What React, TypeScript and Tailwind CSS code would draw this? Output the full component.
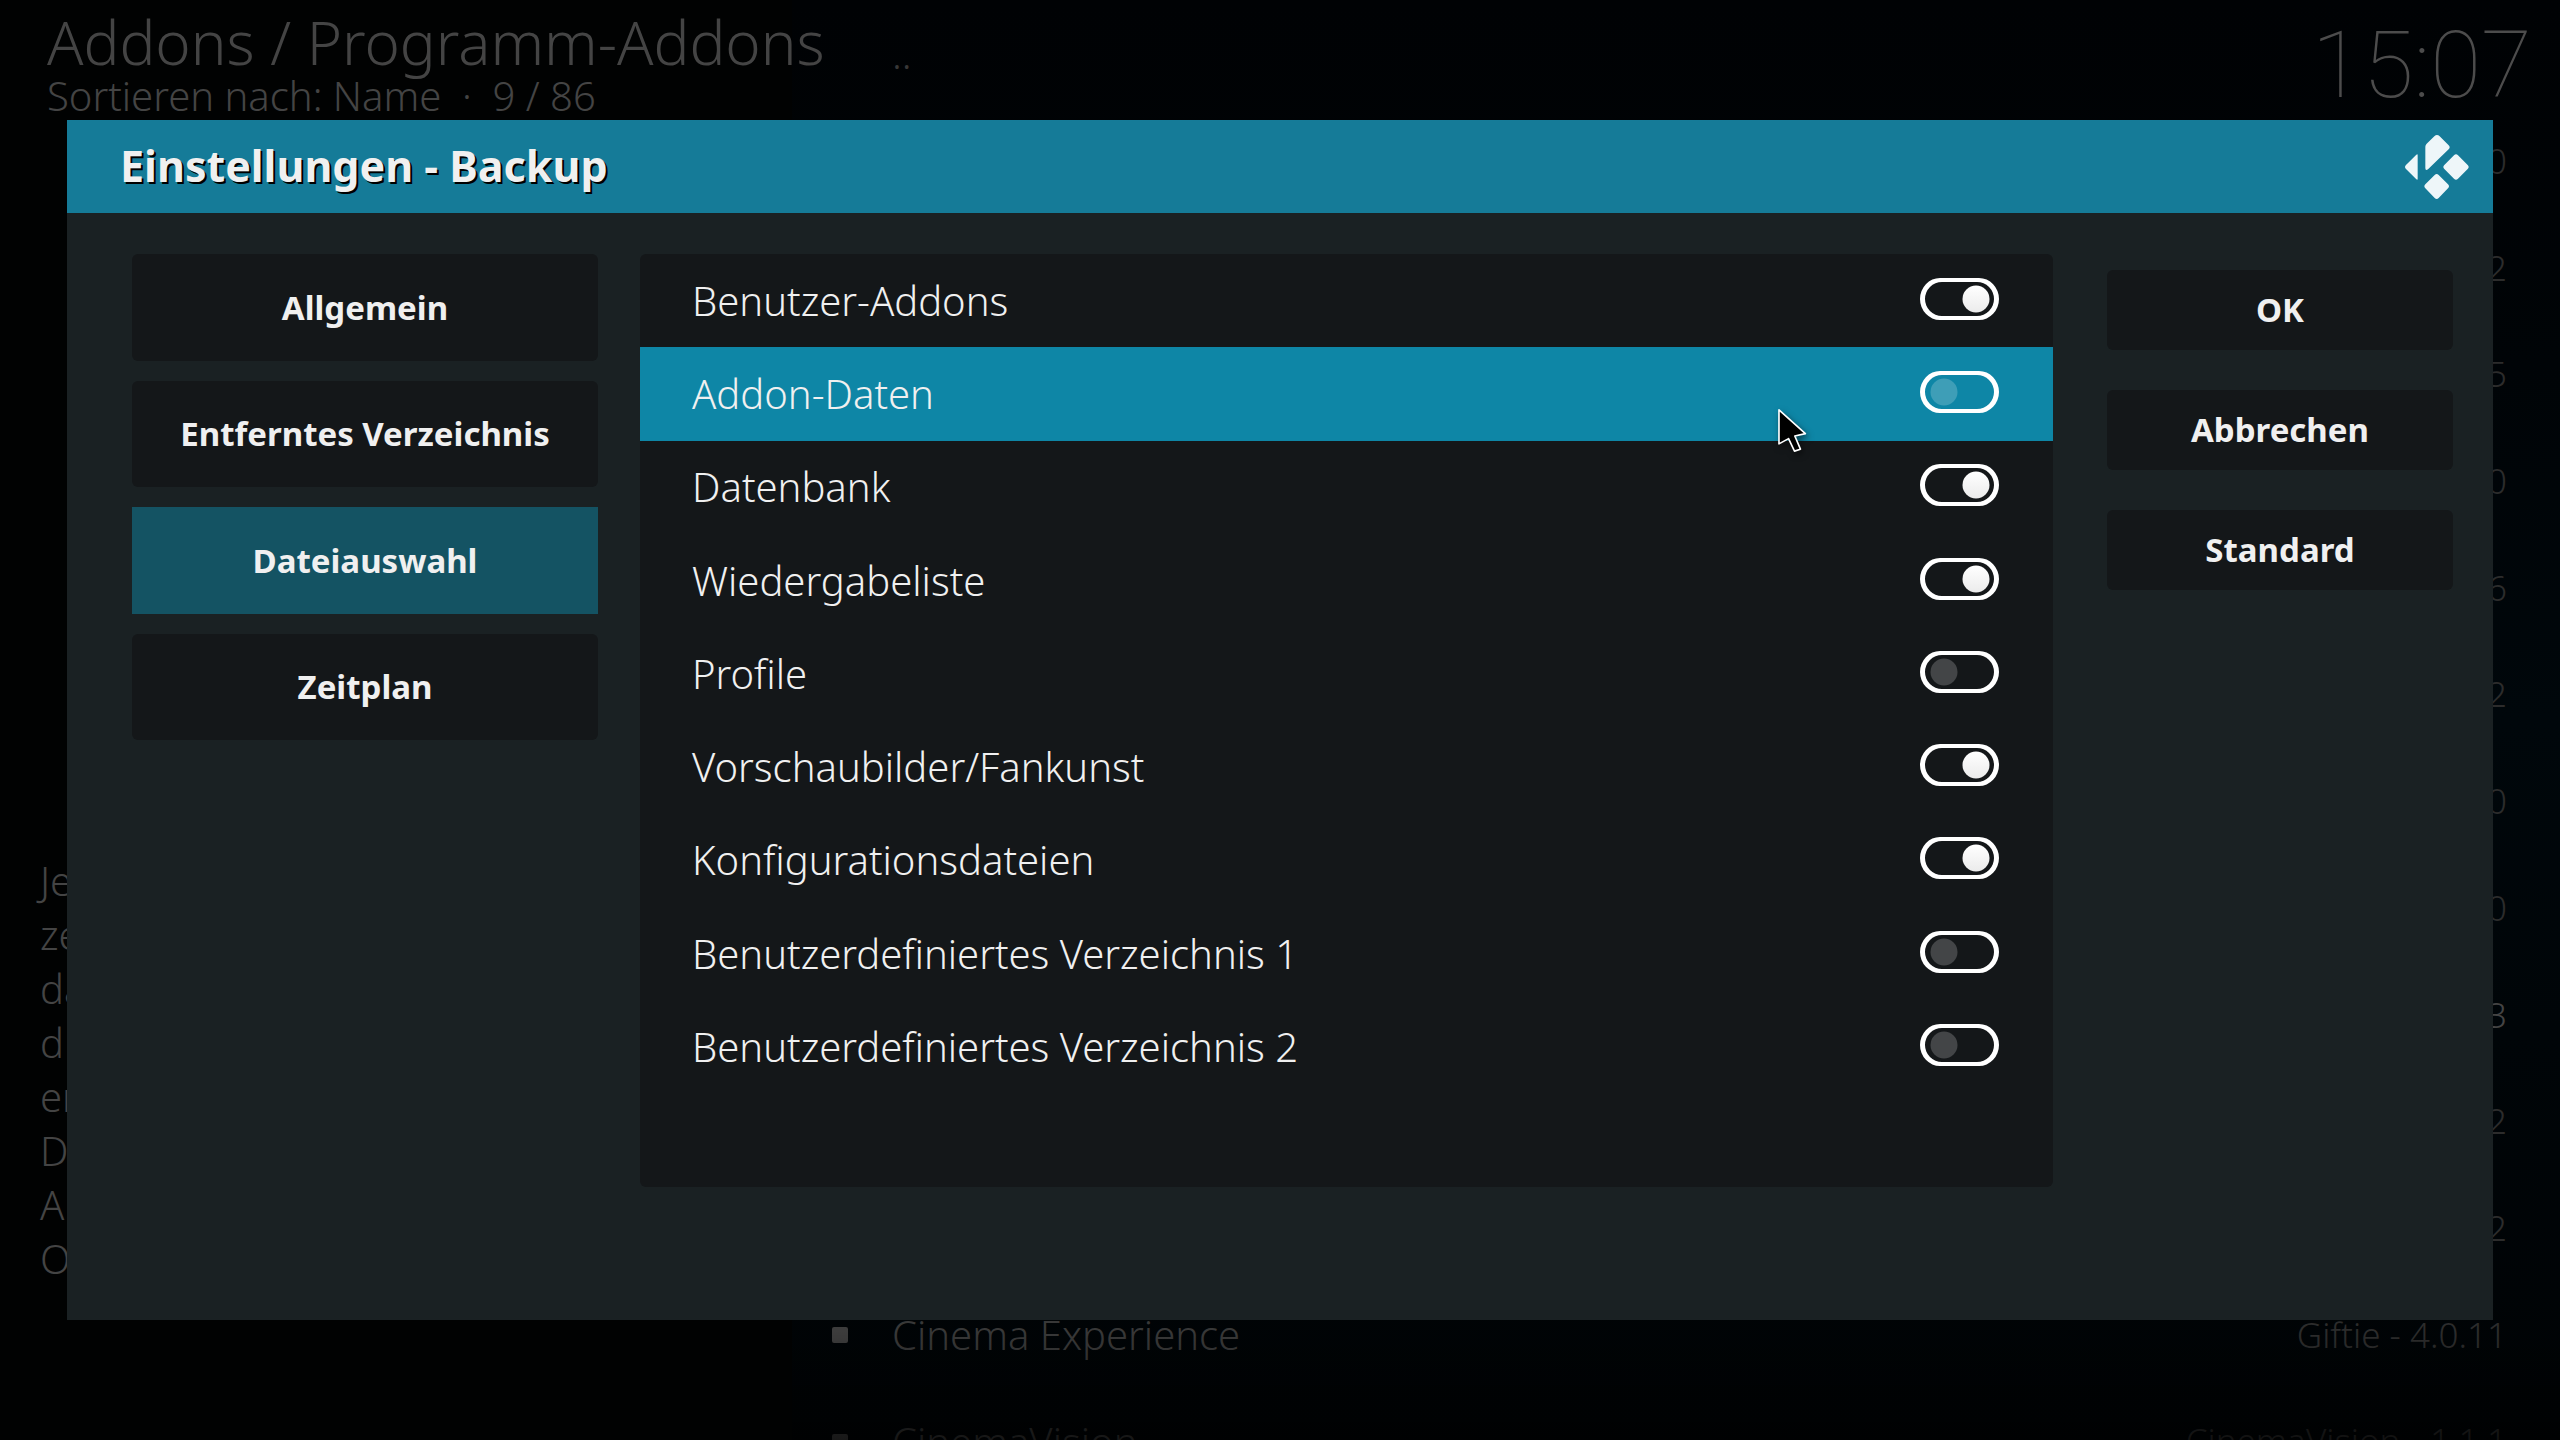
import React, { useState } from 'react';
import clsx from 'clsx';

interface Setting {
  id: string;
  label: string;
  enabled: boolean;
}

interface Addon {
  name: string;
  version: string;
  active?: boolean;
}

const categories = ['Allgemein', 'Entferntes Verzeichnis', 'Dateiauswahl', 'Zeitplan'];

const actions = ['OK', 'Abbrechen', 'Standard'];

const initialSettings: Setting[] = [
  { id: 'user-addons', label: 'Benutzer-Addons', enabled: true },
  { id: 'addon-data', label: 'Addon-Daten', enabled: false },
  { id: 'database', label: 'Datenbank', enabled: true },
  { id: 'playlists', label: 'Wiedergabeliste', enabled: true },
  { id: 'profiles', label: 'Profile', enabled: false },
  { id: 'thumbnails', label: 'Vorschaubilder/Fankunst', enabled: true },
  { id: 'config', label: 'Konfigurationsdateien', enabled: true },
  { id: 'custom-1', label: 'Benutzerdefiniertes Verzeichnis 1', enabled: false },
  { id: 'custom-2', label: 'Benutzerdefiniertes Verzeichnis 2', enabled: false },
];

const addons: Addon[] = [
  { name: '..', version: '' },
  { name: '', version: '0' },
  { name: '', version: '2' },
  { name: '', version: '5' },
  { name: '', version: '0' },
  { name: '', version: '6' },
  { name: '', version: '2' },
  { name: '', version: '0' },
  { name: '', version: '0' },
  { name: '', version: '3', active: true },
  { name: '', version: '2' },
  { name: '', version: '2' },
  { name: 'Cinema Experience', version: 'Giftie - 4.0.11' },
  { name: 'CinemaVision', version: 'CinemaVision - 1.1.1' },
];

const description = ['Je', 'ze', 'da', 'd', 'er', 'D', 'A', 'O'];

const KodiLogo = () => (
  <svg viewBox="75 75 192 192" className="size-16 shrink-0" fill="#eef6f9" aria-hidden="true">
    <path d="M113 136V206Q113 211 109 208L78 177Q72 171 78 165L109 134Q113 130 113 136Z" />
    <path d="M163 79Q171 71 179 79L206 106Q212 112 206 118L144 178Q136 183 136 174V110Q136 105 140 101Z" />
    <path d="M222 136Q228 130 234 136L263 165Q269 171 263 177L234 206Q228 212 222 206L193 177Q187 171 193 165Z" />
    <path d="M164 195Q170 189 176 195L204 223Q210 229 204 235L176 264Q170 270 164 264L136 235Q130 229 136 223Z" />
  </svg>
);

const Toggle = ({ on }: { on: boolean }) => (
  <svg viewBox="0 0 79 42" className="mb-1 h-[42px] w-[79px]" aria-hidden="true">
    <defs>
      <linearGradient id="knob" x1="0" y1="0" x2="0" y2="1">
        <stop offset="0" stopColor="#ffffff" />
        <stop offset="1" stopColor="#ebebeb" />
      </linearGradient>
    </defs>
    <path
      fill="#ffffff"
      fillRule="evenodd"
      d="M20 0H59A20 21 0 0 1 59 42H20A20 21 0 0 1 20 0ZM22 4A17 17 0 0 0 22 38H57A17 17 0 0 0 57 4Z"
    />
    {on ? (
      <circle cx="56" cy="21" r="13.5" fill="url(#knob)" />
    ) : (
      <circle cx="24" cy="21" r="13.5" fill="#ffffff" fillOpacity="0.2" />
    )}
  </svg>
);

const Cursor = () => (
  <svg
    viewBox="0 0 100 150"
    className="pointer-events-none absolute top-[407px] left-[1777px] h-[50px] w-[33px] overflow-visible drop-shadow-[2px_3px_3px_rgba(0,0,0,0.5)]"
    aria-hidden="true"
  >
    <path
      d="M6 8L86 80L54 87L71 127L53 133L35 95L6 111Z"
      fill="#000000"
      stroke="#ffffff"
      strokeWidth="5"
      strokeLinejoin="round"
    />
  </svg>
);

const AddonBrowser = () => (
  <div className="flex h-full font-light text-[#444444]">
    <div className="relative z-10 flex w-[792px] shrink-0 flex-col bg-[#010202] pt-2">
      <h1 className="pl-[47px] text-[60px] leading-[68px] whitespace-nowrap">Addons / Programm-Addons</h1>
      <p className="pl-[47px] text-[40px] leading-[40px] whitespace-nowrap">Sortieren nach: Name &nbsp;·&nbsp; 9 / 86</p>
      <div className="mt-auto mb-[154px] pl-10 text-[40px] leading-[54px]">
        {description.map((line) => (
          <p key={line}>{line}</p>
        ))}
      </div>
    </div>
    <div className="relative min-w-0 flex-1 overflow-hidden bg-linear-to-b from-[#000204] via-[#00070b] to-[#000305] pt-px">
      <ul className="grid h-[1494px] grid-rows-14">
        {addons.map((addon, i) => (
          <li key={i} className="flex items-center pr-[53px] pl-10 text-[#383838]">
            {addon.name && (
              <span className={clsx('h-4 w-4 rounded-xs', addon.name === '..' ? 'bg-transparent' : 'bg-[#3c3c3c]')} />
            )}
            <span className="pl-11 text-[40px]">{addon.name}</span>
            <span className={clsx('ml-auto text-[35px]', addon.active ? 'text-[#444444]' : 'text-[#2c2c2c]')}>
              {addon.version}
            </span>
          </li>
        ))}
      </ul>
      <div className="absolute inset-x-0 bottom-0 h-[110px] bg-linear-to-b from-transparent to-black/60" />
      <time className="absolute top-2.5 right-7 font-['Roboto',sans-serif] text-[93px] leading-[112px] font-thin text-[#4c4c4c]">
        15:07
      </time>
    </div>
  </div>
);

export default function App() {
  const [settings, setSettings] = useState(initialSettings);
  const [category, setCategory] = useState('Dateiauswahl');
  const [focused, setFocused] = useState('addon-data');

  const toggleSetting = (id: string) => {
    setFocused(id);
    setSettings(settings.map((s) => (s.id === id ? { ...s, enabled: !s.enabled } : s)));
  };

  return (
    <div className="relative h-screen overflow-hidden bg-black font-['Noto_Sans',sans-serif]">
      <AddonBrowser />

      <div className="absolute inset-0 z-20 px-[67px] pt-[120px]">
        <div role="dialog" aria-labelledby="dialog-title" className="bg-[#1a2123] text-[#f0f0f0]">
          <header className="flex h-[93px] items-center justify-between bg-[#157b98] pr-6 pl-[53px]">
            <h2 id="dialog-title" className="text-[43px] font-bold [text-shadow:2px_2px_0_#000]">
              Einstellungen - Backup
            </h2>
            <KodiLogo />
          </header>

          <div className="flex items-start pt-[41px] pr-10 pb-[133px] pl-[65px]">
            <nav className="grid h-[486px] w-[466px] shrink-0 grid-rows-4 gap-5">
              {categories.map((name) => (
                <button
                  key={name}
                  type="button"
                  onClick={() => setCategory(name)}
                  className={clsx(
                    'text-[33px] font-bold',
                    name === category ? 'bg-[#145363]' : 'rounded-md bg-[#141719]'
                  )}
                >
                  {name}
                </button>
              ))}
            </nav>

            <div className="ml-[42px] grid h-[933px] min-w-0 flex-1 grid-rows-10 rounded-md bg-[#141719]">
              {settings.map((setting) => (
                <label
                  key={setting.id}
                  className={clsx(
                    'relative flex items-center justify-between pr-[54px] pl-[52px] text-[40px] font-light',
                    setting.id === focused && 'bg-[#0e86a6]'
                  )}
                >
                  {setting.label}
                  <input
                    type="checkbox"
                    checked={setting.enabled}
                    onChange={() => toggleSetting(setting.id)}
                    className="sr-only"
                  />
                  <Toggle on={setting.enabled} />
                </label>
              ))}
            </div>

            <div className="mt-4 ml-[54px] flex w-[346px] shrink-0 flex-col gap-10">
              {actions.map((action) => (
                <button key={action} type="button" className="h-20 rounded-md bg-[#141719] text-[33px] font-bold">
                  {action}
                </button>
              ))}
            </div>
          </div>
        </div>
        <Cursor />
      </div>
    </div>
  );
}
